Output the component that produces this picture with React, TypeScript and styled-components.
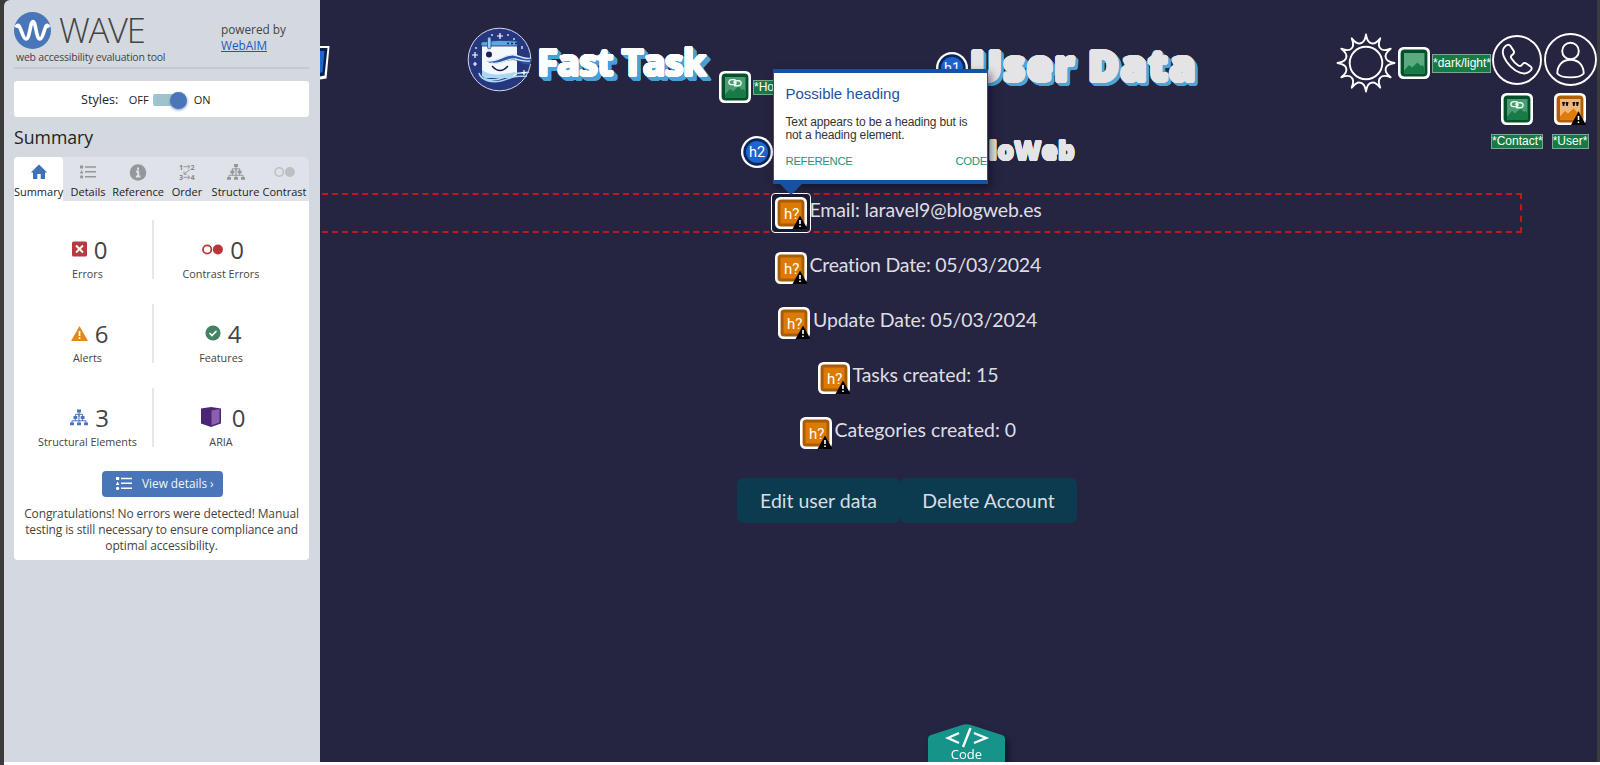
import React from "react";
import styled, { createGlobalStyle } from "styled-components";

const Global = createGlobalStyle`
  *{box-sizing:border-box}
  html,body{margin:0;padding:0;background:#3d3c3c}
  body{overflow:hidden}
`;
const arial = `"Liberation Sans", Arial, sans-serif`;
const open = `"Open Sans", "Noto Sans", sans-serif`;

/* Rounded, thickened lettering with an extruded colour behind it. */
const ring = (r: number, dx: number, dy: number, color: string) =>
  Array.from({ length: 16 }, (_, i) => {
    const a = (i * Math.PI) / 8;
    return `${(dx + r * Math.cos(a)).toFixed(2)}px ${(dy + r * Math.sin(a)).toFixed(2)}px 0 ${color}`;
  }).join(",");
const bubble = (r: number, face: string, depth: number, side: string) =>
  [ring(r, 0, 0, face), ...Array.from({ length: depth }, (_, i) => ring(r, i + 1, i + 1, side))].join(",");

const Frame = styled.div`
  width: 1600px; height: 765px; display: flex; align-items: flex-start; overflow: hidden;
  padding: 0 3px 0 4px;
  background: linear-gradient(#fdfdfd, #fdfdfd) 4px 762px / 1596px 3px no-repeat, #3d3c3c;
`;

/* ---------- side panel ---------- */
const Sidebar = styled.aside`
  position: relative; z-index: 5; width: 316px; height: 762px; flex: none; padding: 0 11px 0 10px;
  background: #d4d9e0; border-top-left-radius: 6px; font-family: ${open}; color: #444;
`;
const Head = styled.header`
  display: flex; justify-content: space-between; height: 69px; border-bottom: 2px solid #c5c9d1;
`;
const LogoBlock = styled.div`padding-top: 11px; width: 170px;`;
const LogoRow = styled.div`display: flex; align-items: center; height: 38px; gap: 8px;`;
const LogoText = styled.span`
  font-size: 34.5px; font-weight: 300; line-height: 38px; letter-spacing: -1.2px; color: #444;
`;
const Tagline = styled.div`
  font-size: 10.5px; line-height: 14px; padding: 1px 0 0 2px; letter-spacing: -0.22px; white-space: nowrap;
`;
const Powered = styled.div`
  width: 88px; padding-top: 21px; font-size: 11.8px; line-height: 16px; color: #444;
`;
const WebLink = styled.a`color: #1a56c4; text-decoration: underline; display: block;`;
const StylesBox = styled.div`
  margin-top: 12px; height: 36px; background: #fff; border-radius: 3px; display: flex;
  align-items: center; padding-left: 67px; color: #222; font-size: 12.6px;
`;
const Small = styled.span<{ $gap?: number }>`font-size: 11px; margin-left: ${(p) => p.$gap ?? 0}px;`;
const Toggle = styled.span`
  width: 34px; height: 18px; margin: 2px 7px 0 4px; display: flex; align-items: center; justify-content: flex-end;
  background: linear-gradient(#9fc3cc, #9fc3cc) 0 50% / 30px 12px no-repeat; border-radius: 6px;
`;
const Knob = styled.span`
  width: 17px; height: 17px; border-radius: 50%; background: #4876b8; box-shadow: 0 1px 3px #6d88b5;
`;
const SummaryTitle = styled.h2`
  margin: 7px 0 0; height: 33px; font-size: 17.7px; line-height: 26px; font-weight: 400; color: #222;
`;
const Tabs = styled.nav`
  display: grid; grid-template-columns: 49px 50px 50px 48px 49px 49px; height: 44px; background: #dfe3e9;
  border-radius: 6px 6px 0 0;
`;
const Tab = styled.div<{ $on?: boolean }>`
  display: flex; flex-direction: column; align-items: center; padding-top: 6px;
  background: ${(p) => (p.$on ? "#fff" : "transparent")}; border-radius: 4px 4px 0 0;
  color: #222; font-size: 11px; line-height: 16px; white-space: nowrap;
  svg { margin-bottom: 3px; height: 18px; overflow: visible; }
`;
const Body = styled.section`
  height: 359px; background: #fff; border-radius: 0 0 4px 4px; padding-top: 19px;
`;
const Stats = styled.div`
  display: grid; grid-template-columns: 140px 134px; grid-auto-rows: 59px; row-gap: 25px;
`;
const Stat = styled.div<{ $line?: boolean }>`
  border-right: ${(p) => (p.$line ? "2px solid #e6e7e9" : "0")};
  padding-top: 12px; padding-left: ${(p) => (p.$line ? 9 : 0)}px; text-align: center; font-size: 10.8px; line-height: 18px;
  white-space: nowrap;
`;
const Figure = styled.div<{ $gap: number }>`
  display: flex; justify-content: center; align-items: center; gap: ${(p) => p.$gap}px; height: 33px;
  font-size: 24px; line-height: 31px; padding: 1px 0 0 4px;
`;
const Num = styled.span``;
const DetailsButton = styled.button`
  display: flex; align-items: center; gap: 10px; margin: 24px 0 0 88px; padding: 0 0 2px 14px; width: 121px; height: 26px;
  border: 0; border-radius: 4px; background: #4876b8; color: #f2f6fc; font: 11.8px ${open}; white-space: nowrap;
`;
const Congrats = styled.p`
  margin: 9px 8px 0; font-size: 12px; letter-spacing: -0.12px; line-height: 15.8px; text-align: center; white-space: nowrap;
`;

/* ---------- inspected page ---------- */
const Page = styled.main`
  position: relative; width: 1277px; height: 762px; flex: none; background: #262541; color: #dedee2;
  font-family: Lato, "Open Sans", sans-serif; overflow: hidden;
`;
const TopBar = styled.div`display: flex; align-items: flex-start; height: 135px; & > * { flex: none; }`;
const ClippedIcon = styled.div`width: 147px; padding-top: 45px; height: 90px;`;
const Brand = styled.div`width: 252px; padding-top: 27px; display: flex; gap: 6px;`;
const BrandName = styled.div`
  font: 700 38px/64px "Open Sans", sans-serif; letter-spacing: -0.9px; color: #fff; white-space: nowrap; padding-top: 2px; margin-left: -1px;
  text-shadow: ${bubble(1.1, "#fff", 4, "#4a9fd8")};
`;
const HomeMark = styled.div`display: flex; align-items: flex-start; gap: 2px; width: 217px; padding-top: 71px;`;
const TitleMark = styled.div`display: flex; align-items: flex-start; width: 400px; padding-top: 52px;`;
const Title = styled.h1`
  margin: -17px 0 0 2px; font: 800 42px/60px "Open Sans", sans-serif; color: #e4e4e6; letter-spacing: 1.6px; white-space: nowrap;
  text-shadow: ${bubble(1.8, "#e4e4e6", 3, "#4ea3d8")};
`;
const Tools = styled.div`display: flex; align-items: flex-start; padding-top: 33px;`;
const Theme = styled.div`display: flex; align-items: center; height: 60px; gap: 2px;`;
const Tool = styled.div<{ $w: number; $pad: number; $gap: number }>`
  width: ${(p) => p.$w}px; display: flex; flex-direction: column; align-items: center; padding-top: ${(p) => p.$pad}px;
  gap: ${(p) => p.$gap}px;
`;
const AltText = styled.span<{ $w: number; $h?: number; $top?: number }>`
  width: ${(p) => p.$w}px; height: ${(p) => p.$h ?? 15}px; line-height: ${(p) => (p.$h ?? 15) - 2}px;
  margin-top: ${(p) => p.$top ?? 0}px; flex: none; background: #177a45; border: 1px solid #76a98f; color: #fff;
  font-family: ${arial}; font-size: 12px; text-align: center; white-space: nowrap; display: block;
`;
const SubHeading = styled.div`
  height: 58px; display: flex; align-items: flex-start; padding: 1px 0 0 421px;
`;
const Hello = styled.h2`
  margin: -4px 0 0; width: 302px; text-align: right; font: 800 26px/36px "Open Sans", sans-serif; color: #e4e4e6;
  letter-spacing: 0.3px; text-shadow: ${ring(0.8, 0, 0, "#e4e4e6")};
`;
const Rows = styled.div`display: grid; grid-auto-rows: 40px; row-gap: 15px; width: 1202px;`;
const Row = styled.div<{ $marked?: boolean }>`
  display: flex; align-items: center; justify-content: center; padding-right: 27px; gap: 3px;
  ${(p) => p.$marked && "margin-left: -8px; padding-left: 8px; outline: 2px dashed #c4161e; outline-offset: -2px;"}
`;
const RowText = styled.span<{ $w: number; $ls: number }>`
  width: ${(p) => p.$w}px; font-size: 19.5px; line-height: 28px; letter-spacing: ${(p) => p.$ls}px; white-space: nowrap;
  padding-bottom: 6px; color: #dedee2;
`;
const Halo = styled.span`
  position: relative; z-index: 1; display: grid; place-items: center; width: 40px; height: 40px; margin: 0 -4px;
  background: #1b1a33; border: 1px solid #fff; border-radius: 4px;
`;
const Actions = styled.div`display: flex; margin: 25px 0 0 417px;`;
const Action = styled.button<{ $w: number }>`
  width: ${(p) => p.$w}px; height: 45px; border: 0; border-radius: 6px; background: #0c3a4e; color: #d9dee2;
  font: 19.5px/30px Lato, sans-serif; padding: 0;
`;
const Tooltip = styled.div`
  position: absolute; z-index: 2; left: 453px; top: 69px; width: 215px; height: 115px; background: #fff;
  border: 1px solid #1a56ab; border-top: 4px solid #17519f; border-bottom: 4px solid #17519f;
  box-shadow: 3px 4px 8px rgba(5,5,20,.5); font-family: ${arial}; color: #333; padding: 12px 0 0 11.5px;
  &::after { content: ""; position: absolute; left: 6px; top: 111px; border: 11px solid transparent; border-top-color: #17519f; border-bottom: 0; }
`;
const TipTitle = styled.div`font-size: 15px; line-height: 18px; color: #2352a0; white-space: nowrap;`;
const TipText = styled.p`margin: 13px 0 0; font-size: 12px; line-height: 13.4px; letter-spacing: -0.14px; white-space: nowrap;`;
const TipLinks = styled.div`
  display: flex; justify-content: space-between; margin-top: 11px; font-size: 11.4px; line-height: 14px; color: #1d947f;
  letter-spacing: -0.35px;
`;
const CodeTab = styled.div`
  position: absolute; left: 608px; bottom: 0; width: 77px; height: 38px; filter: drop-shadow(4px 4px 3px rgba(8,8,25,.55));
`;
const CodeLabel = styled.span`
  position: absolute; left: 0; right: 0; bottom: 0; text-align: center; color: #fff; font: 13px/16px ${open};
`;

/* ---------- drawings ---------- */
const ListIcon = ({ c }: { c: string }) => (
  <svg width="16" height="15" viewBox="0 0 16 15" fill={c}>
    <rect x="0" y="1" width="3.2" height="3" /><path d="M1.6 5.6 3.4 9H-.2z" /><circle cx="1.6" cy="12.4" r="1.6" />
    <path d="M5 1.7h11v1.5H5zM5 6.6h11v1.5H5zM5 11.6h11v1.5H5z" />
  </svg>
);
const TreeIcon = ({ c }: { c: string }) => (
  <svg width="18" height="17" viewBox="0 0 18 17" fill={c}>
    <path d="M7 .5h4v3H7zM3.5 7h3.8v3H3.5zM10.7 7h3.8v3h-3.8zM0 13.5h4v2.8H0zM7 13.5h4v2.8H7zM14 13.5h4v2.8h-4z" />
    <path d="M9 3v5M5.4 8V5.3h7.2V8M9 5v8.5M5.4 9v2.8M12.6 9v2.8M2 14v-2.2h14V14" fill="none" stroke={c} />
  </svg>
);
const Dots = ({ c, s }: { c: string; s: number }) => (
  <svg width="21" height="17" viewBox="0 0 21 17">
    <circle cx="5.2" cy="8.5" r="4.2" fill="none" stroke={c} strokeWidth={s} /><circle cx="15.9" cy="8.5" r="5" fill={c} />
  </svg>
);
const OrderIcon = () => (
  <svg width="16" height="17" viewBox="0 0 16 17" fill="#85888d" fontFamily="Open Sans" fontWeight="700" fontSize="7.2">
    <text x="0" y="6">1</text><text x="11.5" y="6">2</text><text x="0" y="16.5">3</text><text x="11.5" y="16.5">4</text>
    <path d="M4.500 3.200h6.200M8.900 1.300l2 1.900-2 1.900M4.500 13.800h6.200M8.900 11.900l2 1.900-2 1.900M11 6 5 10.500M5 8v2.700h2.700" stroke="#8f9297" fill="none" strokeWidth=".9" />
  </svg>
);
const Warn = () => (
  <g><path d="M25.500 19.500 33 33H18z" fill="#000" /><path d="M25.500 24v4M25.500 29.400v1.600" stroke="#fff" strokeWidth="1.600" /></g>
);
const HIcon = () => (
  <svg width="32" height="32" viewBox="0 0 32 32">
    <rect width="32" height="32" rx="5.500" fill="#fff" /><rect x="2.600" y="2.600" width="26.800" height="26.800" rx="3.500" fill="#a85c06" />
    <rect x="5.500" y="5.500" width="21" height="21" fill="#dc7a04" />
    <text x="16.600" y="21.500" textAnchor="middle" fontFamily="Roboto" fontSize="15" fill="#fff">h?</text>
    <g transform="translate(-.5 -1)"><Warn /></g>
  </svg>
);
const Round = ({ t }: { t: string }) => (
  <svg width="32" height="32" viewBox="0 0 32 32">
    <circle cx="16" cy="16" r="16" fill="#fff" /><circle cx="16" cy="16" r="13.700" fill="#07265a" /><circle cx="16" cy="16" r="11" fill="#1f63cd" />
    <text x="16" y="21.200" textAnchor="middle" fontFamily="Roboto" fontSize="14.500" fill="#fff">{t}</text>
  </svg>
);
const Picture = ({ kind }: { kind: "plain" | "link" | "quote" }) => {
  const q = kind === "quote";
  return (
    <svg width="32" height="32" viewBox="0 0 32 32">
      <rect width="32" height="32" rx="5.500" fill="#fff" /><rect x="2.600" y="2.600" width="26.800" height="26.800" rx="4" fill={q ? "#b05f06" : "#05502c"} />
      <rect x="6" y="6" width="20.500" height="20.500" fill={q ? "#f0b77c" : kind === "plain" ? "#5daa80" : "#4c9c73"} />
      <path d="M6 23.500 11 18l3 2.500 5.500-5L23 19l1.500-1 2 2.500v6H6z" fill={q ? "#dd7c08" : "#187a46"} />
      {kind === "link" && (
        <path d="M16 8.600h-3.200c-3.600 0-4 5-.5 5h2.500c2.800 0 2.700-2.600 1.200-2.700M15.500 14.800h3.700c3.600 0 4-5 .5-5h-2.700c-2.600 0-2.500 2.500-1 2.600" fill="none" stroke="#e8fff1" strokeWidth="1.400" strokeLinecap="round" />
      )}
      {q && <><path d="M8 9h3l-.7 4H8.800zM11.500 9h3l-.7 4h-1.500zM18.500 9h3l-1 4H19zM22 9h3l-1 4h-1.500z" fill="#151009" /><g transform="translate(-1 -1)"><Warn /></g></>}
    </svg>
  );
};
const sunPath = (() => {
  let d = "";
  for (let i = 0; i < 12; i++) {
    const a = (i * Math.PI) / 6 - Math.PI / 2, b = a + Math.PI / 12, c = a + Math.PI / 6;
    const p = (r: number, t: number) => `${(30 + r * Math.cos(t)).toFixed(2)} ${(30 + r * Math.sin(t)).toFixed(2)}`;
    d += `${i ? "" : "M" + p(28.5, a)}Q${p(20.5, a + 0.06)} ${p(20.5, b)}Q${p(20.5, c - 0.06)} ${p(28.5, c)}`;
  }
  return d + "Z";
})();
const Sun = () => (
  <svg width="60" height="60" viewBox="0 0 60 60" fill="none" stroke="#fff" strokeWidth="1.900" strokeLinejoin="round">
    <path d={sunPath} /><circle cx="30" cy="30" r="16.300" />
  </svg>
);
const Phone = () => (
  <svg width="50" height="50" viewBox="0 0 50 50" fill="none" stroke="#fff" strokeWidth="1.900">
    <circle cx="25" cy="25" r="24" />
    <path d="M12 12.800c2.500-3.400 5-4 6.500-1.700l3 4.500c1 1.600.5 3-1 4-1.900 1.200-2 2.500-1 4 1.700 2.800 4 5.200 6.800 6.900 1.500.9 3 .5 4-1 1-1.600 2.500-2 4-1l4.300 3c2 1.500 1.300 3.300-1.800 5.500-5 3.500-12.500.2-18.300-5.600S8.700 17.500 12 12.800z" />
  </svg>
);
const Person = () => (
  <svg width="53" height="53" viewBox="0 0 53 53" fill="none" stroke="#fff" strokeWidth="1.900">
    <circle cx="26.500" cy="26.500" r="25.500" /><circle cx="26.500" cy="18" r="8.300" />
    <path d="M13.300 40.500c0-8 5-13.800 13.200-13.800s13.200 5.800 13.200 13.800c-4 5.200-22.400 5.200-26.400 0z" />
  </svg>
);
const Mascot = () => (
  <svg width="65" height="65" viewBox="0 0 65 65">
    <circle cx="32.500" cy="32.500" r="31.300" fill="#26377e" stroke="#cfd9f3" />
    <path d="M15 19h35v29l-5 3H18l-3-3z" fill="#f4f8fd" /><path d="M15 43c8 6 20 5 33 2l-3 6H18l-3-2z" fill="#a9d8f4" />
    <path d="M14 15q17-3 36-1l1 5H14z" fill="#5aa6df" stroke="#1b2c6b" strokeWidth=".8" />
    <rect x="20.500" y="10" width="3.500" height="12" rx="1.700" fill="#8ecbf2" stroke="#1b2c6b" strokeWidth=".6" />
    <path d="M40 16.500h2m2 0h2m2 0h2" stroke="#12235b" strokeWidth="1.600" />
    <circle cx="22" cy="27.500" r="3" fill="#17244f" /><path d="M25 39q8 9 16 0" fill="none" stroke="#17244f" strokeWidth="1.500" />
    <path d="M19 34c12 2 18-7 28-6 7 1 10 5 17 3v6c-8 2-12-4-18-4-10 0-16 7-27 1z" fill="#31539d" />
    <path d="M19 34c12 2 18-7 28-6 7 1 10 5 17 3M24 36c11 2 16-5 24-4 6 1 9 3 15 2" fill="none" stroke="#d8ecfb" strokeWidth="1.300" />
    <path d="M12 46c2 9 18 8 28 3s17-2 22-4M14 50c9 7 20 5 29 1 6-3 11-1 17-2" fill="none" stroke="#a9d8f4" strokeWidth="1.600" />
    <path d="M33 6v6m-3-3h6M8 25v6m-3-3h6M8 35v4m-2-2h4M57 43v5m-2.500-2.500h5M41 7v2M55 19v3M47 11v2M25 7v2M9 20v2" stroke="#fff" strokeWidth="1.200" />
  </svg>
);

const rows: [string, number, number][] = [
  ["Email: laravel9@blogweb.es", 231, -0.12],
  ["Creation Date: 05/03/2024", 231, -0.24],
  ["Update Date: 05/03/2024", 224, -0.13],
  ["Tasks created: 15", 145, -0.08],
  ["Categories created: 0", 181, 0],
];

export default function App() {
  return (
    <Frame>
      <Global />
      <Sidebar>
        <Head>
          <LogoBlock>
            <LogoRow>
              <svg width="37" height="37" viewBox="0 0 37 37">
                <circle cx="18.500" cy="18.500" r="18.500" fill="#4876b8" />
                <path d="M2 15.500C6 7 8 27 12 27s4-17.500 7-17.500S22 27 26 27s5-20 9-11.500" fill="none" stroke="#fff" strokeWidth="3.600" />
              </svg>
              <LogoText>WAVE</LogoText>
            </LogoRow>
            <Tagline>web accessibility evaluation tool</Tagline>
          </LogoBlock>
          <Powered>powered by<WebLink>WebAIM</WebLink></Powered>
        </Head>
        <StylesBox>
          <span>Styles:</span><Small $gap={10.5}>OFF</Small><Toggle><Knob /></Toggle><Small>ON</Small>
        </StylesBox>
        <SummaryTitle>Summary</SummaryTitle>
        <Tabs>
          <Tab $on>
            <svg width="18" height="18" viewBox="0 0 18 18" fill="#3f71b8"><path d="M9 1.500.8 9.500H3V16h4.300v-5h3.400v5H15V9.500h2.200z" /></svg>
            Summary
          </Tab>
          <Tab><ListIcon c="#94979c" />Details</Tab>
          <Tab>
            <svg width="18" height="18" viewBox="0 0 18 18"><circle cx="9" cy="9.500" r="8.300" fill="#94979c" /><path d="M9 4.500v2.200M7 8.500h2.200v5M6.800 13.500h4.600" stroke="#dfe3e9" strokeWidth="2" fill="none" /></svg>
            Reference
          </Tab>
          <Tab><OrderIcon />Order</Tab>
          <Tab><TreeIcon c="#94979c" />Structure</Tab>
          <Tab><Dots c="#bcbfc3" s={1.5} />Contrast</Tab>
        </Tabs>
        <Body>
          <Stats>
            <Stat $line>
              <Figure $gap={7}>
                <svg width="15" height="16" viewBox="0 0 15 16"><rect y=".5" width="15" height="15" rx="1.500" fill="#b63a3e" /><path d="m4 4.500 7 7m0-7-7 7" stroke="#fff" strokeWidth="1.900" /></svg>
                <Num>0</Num>
              </Figure>Errors
            </Stat>
            <Stat><Figure $gap={7}><Dots c="#ba3438" s={1.8} /><Num>0</Num></Figure>Contrast Errors</Stat>
            <Stat $line>
              <Figure $gap={7}>
                <svg width="17" height="17" viewBox="0 0 17 17"><path d="M8.500 1 17 16H0z" fill="#e08a1c" /><path d="M8.500 6v5M8.500 12.300V14" stroke="#fff" strokeWidth="1.700" /></svg>
                <Num>6</Num>
              </Figure>Alerts
            </Stat>
            <Stat>
              <Figure $gap={7}>
                <svg width="16" height="16" viewBox="0 0 16 16"><circle cx="8" cy="8" r="7.600" fill="#438364" /><path d="m4.500 8 2.500 2.500 4.500-4.500" fill="none" stroke="#fff" strokeWidth="1.600" /></svg>
                <Num>4</Num>
              </Figure>Features
            </Stat>
            <Stat $line><Figure $gap={7}><TreeIcon c="#4876b8" /><Num>3</Num></Figure>Structural Elements</Stat>
            <Stat>
              <Figure $gap={11}>
                <svg width="20" height="20" viewBox="0 0 20 20"><path d="M0 1.500 10 0l10 1.500v15L10 20 0 16.500z" fill="#4a2672" /><path d="m10.500 3.500 8-1.500v13.500l-8 2.700z" fill="#8a5fae" /></svg>
                <Num>0</Num>
              </Figure>ARIA
            </Stat>
          </Stats>
          <DetailsButton><ListIcon c="#fff" />View details ›</DetailsButton>
          <Congrats>Congratulations! No errors were detected! Manual<br />testing is still necessary to ensure compliance and<br />optimal accessibility.</Congrats>
        </Body>
      </Sidebar>

      <Page>
        <TopBar>
          <ClippedIcon>
            <svg width="11" height="36" viewBox="0 0 11 36"><path d="M0 1h9.500L6.500 33.500 0 34.500z" fill="#fff" /><path d="M0 3h7.500L4.500 30.500 0 31.500z" fill="#06204c" /><path d="M0 6h4.500L2.500 27 0 28z" fill="#1d64cf" /></svg>
          </ClippedIcon>
          <Brand><Mascot /><BrandName>Fast Task</BrandName></Brand>
          <HomeMark><Picture kind="link" /><AltText $w={43} $top={9}>*Home*</AltText></HomeMark>
          <TitleMark><Round t="h1" /><Title>User Data</Title></TitleMark>
          <Tools>
            <Theme><Sun /><Picture kind="plain" /><AltText $w={59} $h={19}>*dark/light*</AltText></Theme>
            <Tool $w={52} $pad={2} $gap={8}><Phone /><Picture kind="link" /><AltText $w={52} $top={1}>*Contact*</AltText></Tool>
            <Tool $w={54} $pad={0} $gap={7}><Person /><Picture kind="quote" /><AltText $w={37} $top={2}>*User*</AltText></Tool>
          </Tools>
        </TopBar>
        <SubHeading><Round t="h2" /><Hello>loWeb</Hello></SubHeading>
        <Rows>
          {rows.map(([t, w, ls], i) => (
            <Row key={t} $marked={i === 0}>
              {i === 0 ? <Halo><HIcon /></Halo> : <HIcon />}
              <RowText $w={w} $ls={ls}>{t}</RowText>
            </Row>
          ))}
        </Rows>
        <Actions><Action $w={163}>Edit user data</Action><Action $w={177}>Delete Account</Action></Actions>
        <Tooltip>
          <TipTitle>Possible heading</TipTitle>
          <TipText>Text appears to be a heading but is<br />not a heading element.</TipText>
          <TipLinks><span>REFERENCE</span><span>CODE</span></TipLinks>
        </Tooltip>
        <CodeTab>
          <svg width="77" height="38" viewBox="0 0 77 38">
            <path d="M0 38V15q0-3 3-4L34 1q4.500-1.500 9 0l31 10q3 1 3 4v23z" fill="#17948a" />
            <path d="m31 9-11 5 11 5M46 9l12 5-12 5M42.500 4 35 23" fill="none" stroke="#fff" strokeWidth="2.400" />
          </svg>
          <CodeLabel>Code</CodeLabel>
        </CodeTab>
      </Page>
    </Frame>
  );
}
